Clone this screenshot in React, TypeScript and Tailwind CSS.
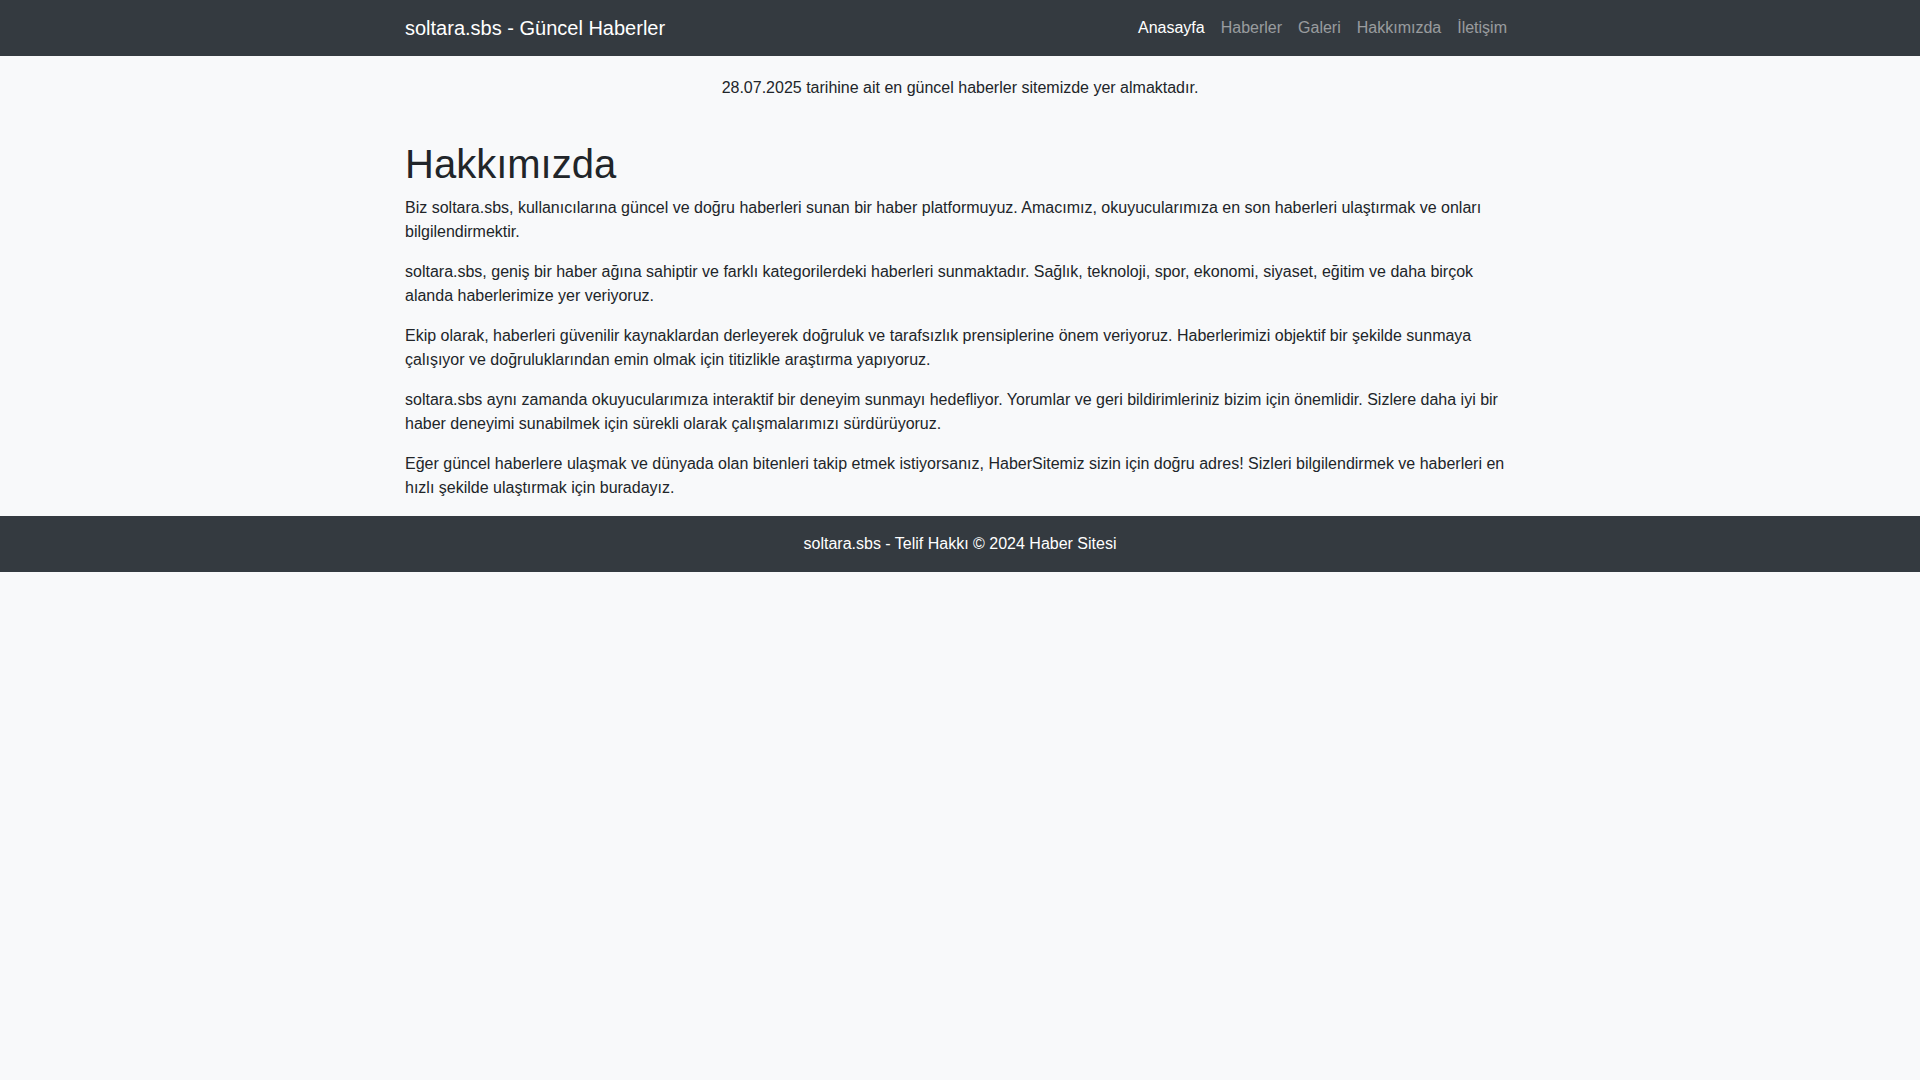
import React from "react";

export default function App() {
  const links = ["Anasayfa", "Haberler", "Galeri", "Hakkımızda", "İletişim"];
  return (
    <div
      className="min-h-screen bg-[#f8f9fa] text-[#212529] text-[16px] leading-[1.5]"
      style={{ fontFamily: '"Liberation Sans", Arial, sans-serif' }}
    >
      <nav className="bg-[#343a40] py-2">
        <div className="w-[1140px] mx-auto px-[15px] flex items-center justify-between">
          <a className="text-white text-[20px] leading-[30px] py-[5px] mr-4">
            soltara.sbs - Güncel Haberler
          </a>
          <ul className="flex">
            {links.map((l, i) => (
              <li key={l}>
                <a
                  className={
                    "block px-2 py-2 leading-6 " +
                    (i === 0 ? "text-white" : "text-[rgba(255,255,255,0.5)]")
                  }
                >
                  {l}
                </a>
              </li>
            ))}
          </ul>
        </div>
      </nav>
      <div className="w-[1140px] mx-auto px-[15px] pt-[20px]">
        <p className="text-center mb-4">
          28.07.2025 tarihine ait en güncel haberler sitemizde yer almaktadır.
        </p>
        <h1 className="text-[40px] leading-[1.2] font-medium mt-10 mb-2">Hakkımızda</h1>
        <p className="mb-4">
          Biz soltara.sbs, kullanıcılarına güncel ve doğru haberleri sunan bir haber platformuyuz. Amacımız, okuyucularımıza en son haberleri ulaştırmak ve onları bilgilendirmektir.
        </p>
        <p className="mb-4">
          soltara.sbs, geniş bir haber ağına sahiptir ve farklı kategorilerdeki haberleri sunmaktadır. Sağlık, teknoloji, spor, ekonomi, siyaset, eğitim ve daha birçok alanda haberlerimize yer veriyoruz.
        </p>
        <p className="mb-4">
          Ekip olarak, haberleri güvenilir kaynaklardan derleyerek doğruluk ve tarafsızlık prensiplerine önem veriyoruz. Haberlerimizi objektif bir şekilde sunmaya çalışıyor ve doğruluklarından emin olmak için titizlikle araştırma yapıyoruz.
        </p>
        <p className="mb-4">
          soltara.sbs aynı zamanda okuyucularımıza interaktif bir deneyim sunmayı hedefliyor. Yorumlar ve geri bildirimleriniz bizim için önemlidir. Sizlere daha iyi bir haber deneyimi sunabilmek için sürekli olarak çalışmalarımızı sürdürüyoruz.
        </p>
        <p className="mb-4">
          Eğer güncel haberlere ulaşmak ve dünyada olan bitenleri takip etmek istiyorsanız, HaberSitemiz sizin için doğru adres! Sizleri bilgilendirmek ve haberleri en hızlı şekilde ulaştırmak için buradayız.
        </p>
      </div>
      <footer className="bg-[#343a40] text-white text-center py-4">
        <p>soltara.sbs - Telif Hakkı © 2024 Haber Sitesi</p>
      </footer>
    </div>
  );
}
